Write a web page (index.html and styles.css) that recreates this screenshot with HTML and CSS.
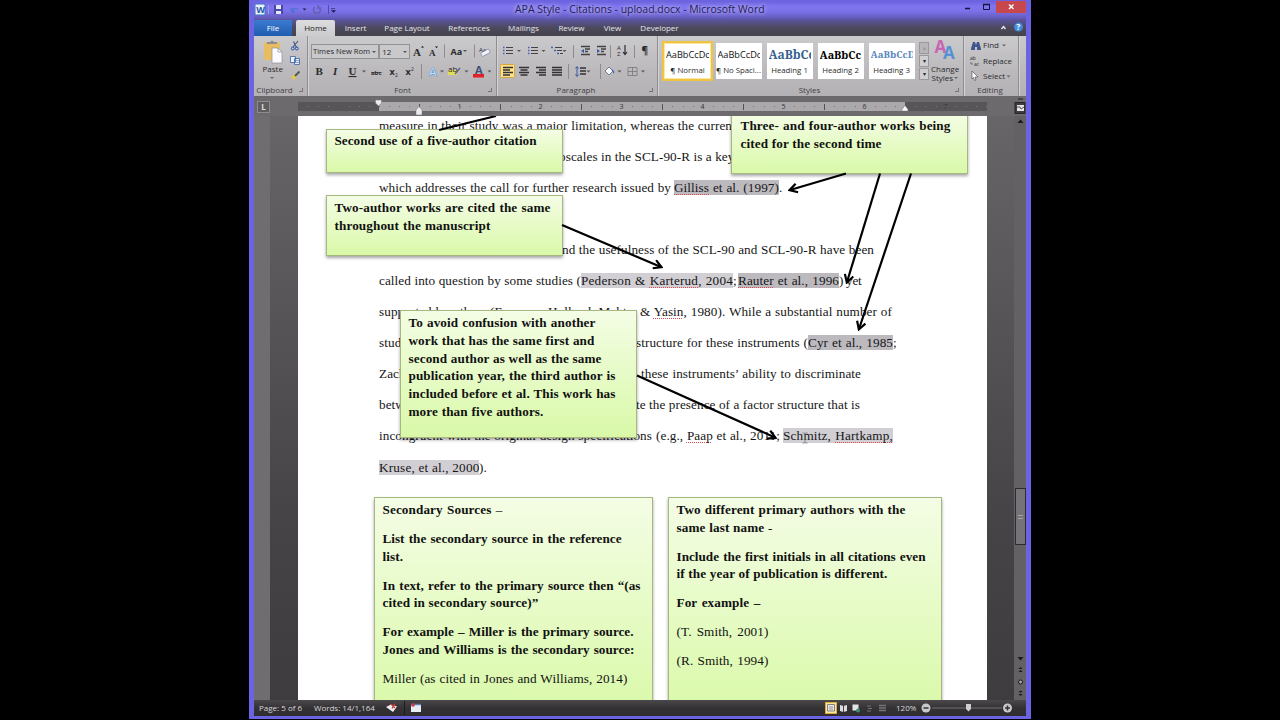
FILE: index.html
```
<!DOCTYPE html>
<html lang="en">
<head>
    <meta charset="UTF-8">
    <title>APA Style - Citations - upload.docx - Microsoft Word</title>
    <link rel="stylesheet" href="styles.css">
</head>
<body>
    <div class="window">
        <header class="titlebar">
            <svg class="quick" width="90" height="18" viewBox="254 1 90 18">
                <rect x="255" y="4" width="10" height="11" rx="1" fill="#e9f1fb" stroke="#3c74bd"/>
                <text x="256.2" y="13" font-size="9" font-weight="bold" fill="#1d5ba8">W</text>
                <path d="M268.5 5v9" stroke="#9a93e6"/>
                <path d="M274 5h9v9h-9z" fill="#4747a5"/>
                <path d="M276 5h5v4h-5zM276 11h5v3h-5z" fill="#e6e6f8"/>
                <path d="M292 11q1-4 6-2M291 8l1 4 3-1" fill="none" stroke="#4d73d8" stroke-width="1.4"/>
                <path d="M302.500 8.500h4l-2 2z" fill="#22204c"/>
                <path d="M319 7a3.500 3.500 0 1 1-4 0M318 5v3h3" fill="none" stroke="#645fae" stroke-width="1.500"/>
                <path d="M328.500 5v9" stroke="#534bab"/>
                <path d="M331 8.500h4M331.500 10.500h4l-2 2z" fill="#22204c" stroke="#22204c" stroke-width=".6"/>
            </svg>
            <h1>APA Style - Citations - upload.docx - Microsoft Word</h1>
            <svg class="controls" width="68" height="18" viewBox="958 1 68 18">
                <path d="M965 8.500h5" stroke="#17133f" stroke-width="1.500"/>
                <path d="M983.500 4.500h6v5h-6z" fill="none" stroke="#17133f"/>
                <path d="M983 4.500h7" stroke="#17133f" stroke-width="1.500"/>
                <rect x="996" y="1" width="30" height="12" fill="#c8474d"/>
                <path d="M1009 4.500l4.500 4.500M1013.500 4.500L1009 9" stroke="#fff" stroke-width="1.400"/>
            </svg>
        </header>

        <nav class="tabs">
            <span class="tab file">File</span>
            <span class="tab home">Home</span>
            <span class="tab insert">Insert</span>
            <span class="tab layout">Page Layout</span>
            <span class="tab refs">References</span>
            <span class="tab mail">Mailings</span>
            <span class="tab review">Review</span>
            <span class="tab view">View</span>
            <span class="tab dev">Developer</span>
            <svg class="help" width="26" height="17" viewBox="1000 19 26 17">
                <path d="M1001.500 29l2-2.500 2 2.500" fill="none" stroke="#eee" stroke-width="1.300"/>
                <circle cx="1018.500" cy="27" r="4.500" fill="#3f8bd8"/>
                <text x="1016.300" y="30.200" font-size="8.500" font-weight="bold" fill="#fff">?</text>
            </svg>
        </nav>

        <section class="ribbon">
            <div class="group clipboard">
                <svg width="54" height="45" viewBox="254 36 54 45">
                    <rect x="264" y="42" width="16" height="18" rx="1.500" fill="#e8bd62"/>
                    <path d="M267 44v-2h3q2-3 4 0h3v2z" fill="#8c8c92"/>
                    <path d="M272 48h6l4 4v11h-10z" fill="#fbfbfd" stroke="#8d9099" stroke-width=".7"/>
                    <path d="M278 48v4h4" fill="none" stroke="#8d9099" stroke-width=".7"/>
                    <text x="262.500" y="72">Paste</text>
                    <path d="M270 77h4l-2 2z" fill="#666"/>
                    <path d="M293.500 41.500l3 6M298 41l-5 6" stroke="#44567f" stroke-width="1.100"/>
                    <circle cx="292.800" cy="48.500" r="1.500" fill="none" stroke="#2c52a8"/>
                    <circle cx="296.800" cy="48.500" r="1.500" fill="none" stroke="#2c52a8"/>
                    <path d="M290.500 56.500h5v6h-5zM294.500 58.500h5v6h-5z" fill="#e9f1fd" stroke="#4b6ea8" stroke-width=".9"/>
                    <path d="M296 60.500h3M296 62.500h3" stroke="#4b6ea8" stroke-width=".6"/>
                    <path d="M291 77l4-3 2 2-3 4z" fill="#e5c948"/>
                    <path d="M295 76l4.500-4.500" stroke="#55565c" stroke-width="2"/>
                </svg>
                <div class="label">Clipboard <i></i></div>
            </div>

            <div class="group font">
                <div class="combos">
                    <span class="combo name">Times New Rom</span>
                    <span class="combo size">12</span>
                    <svg width="86" height="16" viewBox="411 43 86 16">
                        <text class="serif" x="414" y="56" font-size="11">A</text>
                        <path d="M422 47.500l1.500-1.500 1.500 1.500z"/>
                        <text class="serif" x="430" y="56" font-size="9">A</text>
                        <path d="M436 46.500h3l-1.500 1.500z"/>
                        <path d="M445.500 45v13M475.500 45v13" stroke="#8d8b8e" transform="translate(0 -.5)"/>
                        <text x="451.500" y="54.500" font-size="9" font-weight="bold">Aa</text>
                        <path d="M464 50h4l-2 2z" fill="#555"/>
                        <text x="480" y="51.500" font-size="6">Aa</text>
                        <rect x="482" y="51" width="9" height="4" rx="1" fill="#f3f4fb" stroke="#75809d" stroke-width=".7" transform="rotate(-28 486 53)"/>
                    </svg>
                </div>
                <svg width="186" height="20" viewBox="311 61 186 20">
                    <text class="serif" x="315.500" y="75">B</text>
                    <text class="serif italic" x="333" y="75">I</text>
                    <text class="serif under" x="348.500" y="75">U</text>
                    <path d="M362 70.500h4l-2 2z" fill="#555"/>
                    <text x="371" y="74.500" font-size="6" class="strike">abc</text>
                    <text x="389.500" y="74.500" font-size="9" font-weight="bold">x</text>
                    <text x="395" y="76.500" font-size="5">2</text>
                    <text x="405.500" y="74.500" font-size="9" font-weight="bold">x</text>
                    <text x="411" y="70.500" font-size="5">2</text>
                    <path d="M421.500 64v15" stroke="#8d8b8e"/>
                    <text x="429" y="75.500" font-size="11" font-weight="bold" fill="#e8f2fd" stroke="#5c9bd4" stroke-width=".7">A</text>
                    <path d="M440 70.500h4l-2 2z" fill="#555"/>
                    <rect x="448" y="70" width="9" height="5" fill="#dfe057"/>
                    <text x="448" y="71.500">ab</text>
                    <path d="M455 74l5-6" stroke="#5b667e" stroke-width="1.500"/>
                    <path d="M464.500 70.500h4l-2 2z" fill="#555"/>
                    <text x="475" y="74" font-size="11" font-weight="bold" fill="#3c5278">A</text>
                    <rect x="473" y="74" width="11" height="3.500" fill="#e02126"/>
                    <path d="M487.500 70.500h4l-2 2z" fill="#555"/>
                </svg>
                <div class="label">Font <i></i></div>
            </div>

            <div class="group paragraph">
                <svg width="160" height="43" viewBox="498 38 160 43">
                    <g stroke="#444246" stroke-width="1.200">
                        <path d="M507 47.500h7M507 50.500h7M507 53.500h7M532 47.500h7M532 50.500h7M532 53.500h7"/>
                        <path d="M556 47.500h7M558 50.500h5M561 53.500h3"/>
                        <path d="M582 46.500h9M586 49h5M586 51.500h3M582 54.500h9M598 46.500h9M602 49h5M602 51.500h3M598 54.500h9" stroke-width="1.500"/>
                    </g>
                    <path d="M504 47.500h1.500M504 50.500h1.500M504 53.500h1.500M529 47.500h1.500M529 50.500h1.500M529 53.500h1.500M552 47.500h2M555 50.500h2M558 53.500h2" stroke="#4263b4" stroke-width="1.500"/>
                    <path d="M585 49l-3 2 3 2zM598 49l3 2-3 2z" fill="#3458ae"/>
                    <path d="M518 50h4l-2 2zM542.500 50h4l-2 2zM563.500 50h4l-2 2z" fill="#555"/>
                    <path d="M574.500 45v13M611.500 45v13M635.500 45v13" stroke="#8d8b8e"/>
                    <text x="618" y="50" font-size="6" fill="#34549e">A</text>
                    <text x="618" y="56" font-size="6">Z</text>
                    <path d="M626 45v9M624 52l2 2.500 2-2.500" fill="none" stroke="#2c2b2e" stroke-width="1.200"/>
                    <text x="642.500" y="54" font-size="10" font-weight="bold">¶</text>
                    <rect x="501.500" y="64.500" width="14" height="13" rx="1" fill="#fbe28b" stroke="#d9a53c"/>
                    <g stroke="#333136" stroke-width="1.300">
                        <path d="M504 67.500h10M504 70h7M504 72.500h10M504 75h7"/>
                        <path d="M520 67.500h10M521.500 70h7M520 72.500h10M521.500 75h7"/>
                        <path d="M537 67.500h10M540 70h7M537 72.500h10M540 75h7"/>
                        <path d="M553 67.500h10M553 70h10M553 72.500h10M553 75h10"/>
                        <path d="M581 68h6M581 71h6M581 74h6"/>
                    </g>
                    <path d="M569.500 64v15M601.500 64v15" stroke="#8d8b8e"/>
                    <path d="M578 67v9M576.500 68.500l1.500-2 1.500 2M576.500 74.500l1.500 2 1.500-2" fill="none" stroke="#3458ae"/>
                    <path d="M606 71l4-4 4 4-4 4z" fill="#f7f8fb" stroke="#59647e" stroke-width=".8"/>
                    <path d="M612 69q4 1 3 5z" fill="#3e63b8"/>
                    <path d="M587.500 70.500h4l-2 2zM618.500 70.500h4l-2 2zM642 70.500h4l-2 2z" fill="#555"/>
                    <path d="M629 67.500h9v8h-9zM633.500 67.500v8M629 71.500h9" fill="none" stroke="#77767b" stroke-width=".8"/>
                </svg>
                <div class="label">Paragraph <i></i></div>
            </div>

            <div class="group styles">
                <div class="gallery">
                    <div class="style selected"><b>AaBbCcDc</b><span>¶ Normal</span></div>
                    <div class="style"><b>AaBbCcDc</b><span>¶ No Spaci...</span></div>
                    <div class="style h1"><b>AaBbCc</b><span>Heading 1</span></div>
                    <div class="style h2"><b>AaBbCc</b><span>Heading 2</span></div>
                    <div class="style h3"><b>AaBbCcD</b><span>Heading 3</span></div>
                    <div class="scroller"><i class="off">▴</i><i>▾</i><i>▾</i></div>
                </div>
                <svg width="34" height="43" viewBox="929 38 34 43">
                    <text class="wide" x="934.500" y="53" font-weight="bold">A</text>
                    <text class="wide" x="943" y="59" font-weight="bold">A</text>
                    <text x="931" y="71.800">Change</text>
                    <text x="931.500" y="81">Styles</text>
                    <path d="M954 77h4l-2 2z" fill="#666"/>
                </svg>
                <div class="label">Styles <i></i></div>
            </div>

            <div class="group editing">
                <svg width="54" height="43" viewBox="964 38 54 43">
                    <path d="M971 48.500l2-6.500h2l1 3 1-3h2l2 6.500v1.500h-4v-3h-2v3h-4z" fill="#3f578e"/>
                    <text x="983" y="48.300">Find</text>
                    <path d="M1002 44.500h4l-2 2z" fill="#666"/>
                    <text x="970" y="60" font-size="5">ab</text>
                    <text x="974" y="65.500" font-size="5" fill="#31549b">ac</text>
                    <path d="M971 62v2h2" fill="none" stroke="#444" stroke-width=".6"/>
                    <text x="983" y="63.800">Replace</text>
                    <path d="M972 71l6 6h-3l1 3-1.500.5-1-3-1.500 1.500z" fill="#fff" stroke="#555" stroke-width=".7"/>
                    <text x="983" y="79.300">Select</text>
                    <path d="M1006.500 75.500h4l-2 2z" fill="#666"/>
                </svg>
                <div class="label">Editing</div>
            </div>
        </section>

        <div class="ruler">
            <span class="tabstop">L</span>
            <div class="scale">
                <span class="inches"><i>1</i><i>2</i><i>3</i><i>4</i><i>5</i><i>6</i><i>7</i></span>
                <svg class="markers" width="689" height="18" viewBox="298 98 689 18">
                    <path d="M298.500 103v8M338.500 104v6M419.500 104v6M500.500 104v6M581.500 104v6M662.500 104v6M743.500 104v6M824.500 104v6" stroke="#555357"/>
                    <path d="M375.500 100h6v3l-3 3-3-3z" fill="#ececee" stroke="#77757a" stroke-width=".5"/>
                    <path d="M416 110l3-3.500 3 3.500v5h-6z" fill="#ececee" stroke="#77757a" stroke-width=".5"/>
                    <path d="M902 111v-1.500l3-4 3 4v1.500z" fill="#fafafa" stroke="#77757a" stroke-width=".5"/>
                </svg>
            </div>
            <svg width="12" height="19" viewBox="1014 97 12 19">
                <path d="M1018 99h5" stroke="#1d1c1e"/>
                <rect x="1015" y="102.500" width="10" height="11" fill="#3d3b3e" stroke="#262527"/>
                <path d="M1017 105h7v6h-7z" fill="#e6e5e7"/>
                <path d="M1017 107h3l1 2 3-2" fill="none" stroke="#555"/>
            </svg>
        </div>

        <main class="workspace">
            <div class="gutter"></div>
            <div class="page">
                <div class="text">
                    <p class="line"><span class="l1">measure in their study was a major limitation, whereas the curren</span></p>
                    <p class="line"><span class="lead l2"></span><span class="l2b">oscales in the SCL-90-R is a key</span></p>
                    <p class="line"><span class="l3">which addresses the call for further research issued by</span><mark class="dark l3b"><u>Gilliss</u> et al. (1997)</mark>.</p>
                    <p class="line"></p>
                    <p class="line"><span class="lead l5"></span><span class="l5b">nd the usefulness of the SCL-90 and SCL-90-R have been</span></p>
                    <p class="line"><span class="l6">called into question by some studies (</span><mark class="l6b">Pederson &amp; <u>Karterud</u>, 2004</mark><span class="l6c">;</span><mark class="dark l6d"><u>Rauter</u> et al., 1996</mark><span class="l6e">) yet</span></p>
                    <p class="line"><span class="l7">supported by others (Evenson, Holland, Mehta,</span><span class="l7b">&amp; <u>Yasin</u>, 1980). While a substantial number of</span></p>
                    <p class="line"><span class="lead l8">stud</span><span class="l8b">structure for these instruments (</span><mark class="dark l8c">Cyr et al., 1985</mark>;</p>
                    <p class="line"><span class="lead l9">Zach</span><span class="l9b">these instruments’ ability to discriminate</span></p>
                    <p class="line"><span class="lead l10">betw</span><span class="l10b">te the presence of a factor structure that is</span></p>
                    <p class="line"><span class="l11">incongruent with the original design specifications</span><span class="l11b">(e.g., <u>Paap</u> et al., 2011;</span><mark class="l11c">Schmitz, <u>Hartkamp,</u></mark></p>
                    <p class="line"><mark class="l12">Kruse, et al., 2000</mark>).</p>
                </div>

                <svg class="arrows" width="689" height="584" viewBox="298 116 689 584">
                    <defs>
                        <marker id="head" viewBox="0 0 10 10" refX="8" refY="5" markerWidth="11" markerHeight="11" markerUnits="userSpaceOnUse" orient="auto">
                            <path d="M1.500 1L8.500 5l-7 4" fill="none" stroke="#000" stroke-width="2"/>
                        </marker>
                    </defs>
                    <path d="M496 116l-57 14"/>
                    <path d="M846 173.500l-56 16.500" marker-end="url(#head)"/>
                    <path d="M880 173.500L847 282" marker-end="url(#head)"/>
                    <path d="M911 173.500L859 329" marker-end="url(#head)"/>
                    <path d="M562 225l99 42" marker-end="url(#head)"/>
                    <path d="M637 375.500L775 437.500" marker-end="url(#head)"/>
                    <path class="ibeam" d="M802.500 433h2l.5.5.5-.5h2M802.500 443h2l.5-.5.5.5h2M805 433v10"/>
                </svg>

                <aside class="note five"><p><span class="n1">Second use of a five-author citation</span></p></aside>
                <aside class="note two"><p><span class="n2">Two-author works are cited the same</span><span class="n3">throughout the manuscript</span></p></aside>
                <aside class="note three"><p><span class="n4">Three- and four-author works being</span><span class="n5">cited for the second time</span></p></aside>
                <aside class="note avoid">
                    <p>
                        <span class="a1">To avoid confusion with another</span>
                        <span class="a2">work that has the same first and</span>
                        <span class="a3">second author as well as the same</span>
                        <span class="a4">publication year, the third author is</span>
                        <span class="a5">included before et al. This work has</span>
                        <span class="a6">more than five authors.</span>
                    </p>
                </aside>
                <aside class="note secondary">
                    <p><span class="b1">Secondary Sources <em>–</em></span></p>
                    <p><span class="b2">List the secondary source in the reference</span><span class="last">list.</span></p>
                    <p><span class="b3">In text, refer to the primary source then “(as</span><span class="b4">cited in secondary source)”</span></p>
                    <p><span class="b5">For example – Miller is the primary source.</span><span class="b6">Jones and Williams is the secondary source:</span></p>
                    <p class="plain"><span class="b7">Miller (as cited in Jones and Williams, 2014)</span></p>
                </aside>
                <aside class="note lastname">
                    <p><span class="c1">Two different primary authors with the</span><span class="c2">same last name <em>-</em></span></p>
                    <p><span class="c3">Include the first initials in all citations even</span><span class="c4">if the year of publication is different.</span></p>
                    <p><span class="c5">For example –</span></p>
                    <p class="plain"><span class="c6">(T. Smith, 2001)</span></p>
                    <p class="plain"><span class="c7">(R. Smith, 1994)</span></p>
                </aside>
            </div>
            <div class="backdrop"></div>
            <div class="scrollbar">
                <svg width="12" height="584" viewBox="1014 116 12 584">
                    <path d="M1017.500 123l3-3.500 3 3.500z" fill="#1b1a1c"/>
                    <rect x="1015.500" y="488.500" width="10" height="56" fill="#757377" stroke="#2d2b2e"/>
                    <path d="M1018 515.500h5M1018 518.500h5" stroke="#a5a3a6"/>
                    <path d="M1017.500 657l3 3.500 3-3.500z" fill="#1b1a1c"/>
                    <path d="M1018.500 669l2-2 2 2zM1018.500 672l2-2 2 2zM1018.500 691l2 2 2-2zM1018.500 694l2 2 2-2z" fill="#1b1a1c"/>
                    <circle cx="1020.500" cy="682" r="2" fill="#a5a3a6" stroke="#1b1a1c"/>
                </svg>
            </div>
        </main>

        <footer class="status">
            <span class="pages">Page: 5 of 6</span>
            <span class="words">Words: 14/1,164</span>
            <svg width="46" height="16" viewBox="380 700 46 16">
                <path d="M386 707l5-2.500 6 2-4 5.500z" fill="#edeff5"/>
                <path d="M391 704l4 4M395 703.500l-3 5" stroke="#cf3838" stroke-width="1.300"/>
                <path d="M404.500 701v14" stroke="#1c1b1d"/>
                <rect x="411" y="704" width="10" height="8" fill="#e9edf6"/>
                <path d="M411 704.500h10" stroke="#5d80bd" stroke-width="1.500"/>
                <circle cx="413" cy="705" r="1.800" fill="#c93b3b"/>
            </svg>
            <svg class="views" width="72" height="16" viewBox="820 700 72 16">
                <rect x="825.500" y="702.500" width="11" height="11" fill="#fae7a3" stroke="#dfa73e"/>
                <path d="M827.500 704.500h7v6.500h-7z" fill="#e8e8ea" stroke="#67666a" stroke-width=".8"/>
                <path d="M829 707h4M829 709h4" stroke="#67666a" stroke-width=".7"/>
                <path d="M840 705l3.500 1 3.500-1v6l-3.500 1-3.500-1z" fill="#dddce0"/>
                <path d="M843.500 706v6" stroke="#444"/>
                <rect x="852.500" y="704.500" width="6" height="6" fill="#e5e5e8"/>
                <circle cx="858" cy="710.500" r="2" fill="#3a8d79"/>
                <path d="M867 706h4M868 708.500h4M867 711h4" stroke="#77757a"/>
                <path d="M879 705.500h7M879 708h7M879 710.500h7" stroke="#77757a" stroke-width="1.300"/>
            </svg>
            <span class="percent">120%</span>
            <svg width="110" height="16" viewBox="916 700 110 16">
                <path d="M932 708h70" stroke="#737175"/>
                <circle cx="926" cy="708" r="4.500" fill="#c9c8cb"/>
                <path d="M923.500 708h5" stroke="#343235" stroke-width="1.500"/>
                <path d="M966 704h5v5l-2.500 2.500-2.500-2.500z" fill="#cfced1"/>
                <circle cx="1007.500" cy="708" r="4.500" fill="#c9c8cb"/>
                <path d="M1005 708h5M1007.500 705.500v5" stroke="#343235" stroke-width="1.500"/>
            </svg>
        </footer>
    </div>
</body>
</html>
```
FILE: styles.css
```
* {
    margin: 0;
    padding: 0;
    box-sizing: border-box;
}

body {
    width: 1280px;
    height: 720px;
    overflow: hidden;
    background: #000;
    font-family: "Open Sans", "Noto Sans", sans-serif;
    font-size: 8px;
    color: #2b2a2d;
}

svg {
    display: block;
    flex: none;
}

i {
    font-style: normal;
}

.window {
    width: 782px;
    height: 719px;
    margin-left: 249px;
    border: solid #6c63e2;
    border-width: 1px 5px 4px;
    display: flex;
    flex-direction: column;
    background: #6c63e2;
}

/* Title bar */
.titlebar {
    height: 18px;
    display: flex;
    justify-content: space-between;
    background: linear-gradient(#6a61dc, #7f75ef 30%, #7a70e6 60%, #5f58b4);
}

.titlebar h1 {
    font-size: 10.45px;
    line-height: 17px;
    font-weight: normal;
    white-space: nowrap;
    color: #25214f;
    text-shadow: 0 0 5px #b9b3f8, 0 0 4px #b9b3f8;
}

.quick {
    margin-right: 171px;
}

.controls {
    margin-left: auto;
}

/* Tabs */
.tabs {
    height: 17px;
    display: flex;
    align-items: flex-end;
    background: linear-gradient(#5c56a4, #4c495f 50%, #454348);
}

.tab {
    height: 16px;
    line-height: 16px;
    font-size: 8px;
    text-align: center;
    white-space: nowrap;
    color: #e6e5ea;
}

.file {
    width: 38px;
    margin-right: 4px;
    background: linear-gradient(#3b7bd0, #205cb0);
    color: #fff;
}

.home {
    width: 39px;
    background: linear-gradient(#dddcdf, #cccbce);
    border-radius: 2px 2px 0 0;
    color: #222;
}

.insert { width: 41px; }
.layout { width: 62px; }
.refs { width: 62px; }
.mail { width: 47px; }
.review { width: 49px; }
.view { width: 33px; }
.dev { width: 61px; }

.help {
    margin-left: auto;
}

/* Ribbon */
.ribbon {
    height: 61px;
    display: flex;
    background: linear-gradient(#cac9cc, #bbb9bc 60%, #b3b1b4);
    border-bottom: 1px solid #6a686b;
}

.group {
    height: 60px;
    display: flex;
    flex-direction: column;
    justify-content: flex-end;
    border-right: 1px solid #8f8d90;
    box-shadow: 1px 0 #d3d2d4;
}

.clipboard { width: 54px; }
.font { width: 189px; padding-left: 3px; }
.paragraph { width: 161px; }
.styles { width: 306px; position: relative; }
.editing { width: 55px; }

.ribbon svg {
    overflow: visible;
}

.ribbon svg text {
    font-size: 8px;
    fill: #2b2a2d;
}

.ribbon svg text[font-size="5"] { font-size: 5px; }
.ribbon svg text[font-size="6"] { font-size: 6px; }
.ribbon svg text[font-size="9"] { font-size: 9px; }
.ribbon svg text[font-size="10"] { font-size: 10px; }
.ribbon svg text[font-size="11"] { font-size: 11px; }
.ribbon svg text[fill="#3c5278"] { fill: #3c5278; }
.ribbon svg text[fill="#e8f2fd"] { fill: #e8f2fd; }

.ribbon svg .serif {
    font-family: "Liberation Serif", serif;
    font-weight: bold;
    font-size: 11px;
}

.ribbon svg .italic { font-style: italic; }
.ribbon svg .under { text-decoration: underline; }
.ribbon svg .strike { text-decoration: line-through; font-weight: bold; }

.ribbon svg .wide {
    font-size: 17px;
    fill: #5592d3;
}

.ribbon svg .wide:first-child {
    fill: #c765b3;
}

.label {
    height: 15px;
    line-height: 17px;
    padding-right: 2px;
    text-align: center;
    color: #3f3e41;
    position: relative;
}

.clipboard .label {
    padding-right: 12px;
}

.label i {
    position: absolute;
    right: 4px;
    top: 7px;
    width: 4px;
    height: 4px;
    border: solid #747276;
    border-width: 0 1px 1px 0;
}

.combos {
    display: flex;
    align-items: center;
    margin-bottom: 2px;
}

.combo {
    height: 15px;
    line-height: 13px;
    padding-left: 2px;
    border: 1px solid #949296;
    background: #c9c8cb;
    position: relative;
    white-space: nowrap;
}

.combo::after {
    content: "";
    position: absolute;
    right: 2px;
    top: 6px;
    border: 2px solid transparent;
    border-top-color: #555;
}

.name {
    width: 69px;
    padding-left: 1px;
    font-size: 7.6px;
}

.size { width: 31px; }

.gallery {
    position: absolute;
    left: 4px;
    top: 6px;
    display: flex;
}

.style {
    width: 46px;
    height: 36px;
    margin: 1px 2.5px;
    background: #fff;
    text-align: center;
    overflow: hidden;
    white-space: nowrap;
}

.style b {
    display: block;
    height: 22px;
    line-height: 23px;
    font-size: 9.2px;
    font-weight: normal;
    text-align: left;
    color: #111;
    overflow: hidden;
    margin: 0 2px;
}

.style span {
    display: block;
    line-height: 11px;
    font-size: 7.8px;
}

.selected {
    width: 51px;
    height: 40px;
    margin: -1px 0;
    border: 2px solid #f0c443;
    box-shadow: inset 0 0 0 1px #fbe79e;
}

.h1 b,
.h2 b,
.h3 b {
    font-family: "Noto Serif", "DejaVu Serif", serif;
    font-weight: bold;
}

.h1 b { color: #35608f; font-size: 12px; }
.h2 b { color: #000; font-size: 10.8px; }
.h3 b { color: #5b88bd; font-size: 9.6px; }

.scroller {
    width: 10px;
    margin-left: 2px;
}

.scroller i {
    display: block;
    height: 12px;
    margin-bottom: 1px;
    border: 1px solid #9a989b;
    background: #cfced1;
    font-size: 6px;
    line-height: 10px;
    text-align: center;
}

.scroller .off {
    color: #969497;
    background: #b8b6b9;
}

.styles > svg {
    align-self: flex-end;
}

/* Ruler */
.ruler {
    height: 19px;
    display: flex;
    background: #6c6a6d;
}

.tabstop {
    width: 13px;
    height: 12px;
    margin: 4px 28px 0 3px;
    border: 1px solid #8e8c8f;
    background: #5f5d60;
    font-size: 8px;
    line-height: 10px;
    font-weight: bold;
    text-align: center;
    color: #ddd;
}

.scale {
    width: 689px;
    height: 9px;
    margin: 5px 27px 0 0;
    position: relative;
    background: linear-gradient(90deg, #575558 81px, #aaa8ab 81px 607px, #575558 607px);
}

.inches {
    height: 9px;
    display: flex;
    padding-left: 121px;
    background: repeating-linear-gradient(90deg, #77757a 0 1px, transparent 1px 10.12px) 0 4px / 100% 1px no-repeat;
}

.inches i {
    width: 81px;
    text-align: center;
    font-size: 7px;
    line-height: 9px;
    color: #3a383b;
}

.markers {
    position: absolute;
    left: 0;
    top: -4px;
}

/* Document */
.workspace {
    height: 584px;
    display: flex;
    background: linear-gradient(#676568, #464346 70%, #3f3c3f);
}

.gutter {
    width: 44px;
    background: linear-gradient(90deg, #6f6d70 16px, transparent 16px);
}

.page {
    width: 689px;
    position: relative;
    overflow: hidden;
    background: #fff;
    color: #161616;
    font-family: "Liberation Serif", serif;
    font-size: 13.2px;
}

.backdrop {
    width: 27px;
}

.scrollbar {
    width: 12px;
    background: #636164;
}

.text {
    margin: -6.5px 0 0 81px;
    letter-spacing: .08px;
}

.line {
    height: 31.1px;
    line-height: 31.1px;
    display: flex;
    align-items: center;
    white-space: nowrap;
}

.line > * {
    flex: none;
}

.line span:not(.lead),
.line mark,
.note span {
    text-align: justify;
    text-align-last: justify;
    white-space: nowrap;
}

.line mark {
    height: 15px;
    line-height: 15px;
    background: #d2cfd4;
    color: inherit;
}

.line .dark {
    background: #bdbabf;
}

u {
    text-decoration: underline dotted #dc4b50 1px;
    text-underline-offset: 2px;
    text-decoration-skip-ink: none;
}

.l1 { width: 353px; }
.l2 { width: 180px; }
.l2b { width: 173px; }
.l3 { width: 292px; margin-right: 3px; }
.l3b { width: 105px; }
.l5 { width: 183px; }
.l5b { width: 312px; }
.l6 { width: 202px; }
.l6b { width: 152px; }
.l6c { width: 5px; }
.l6d { width: 101px; }
.l6e { width: 22px; letter-spacing: -.3px; }
.l7 { width: 257px; margin-right: 4px; }
.l7b { width: 252px; }
.l8 { width: 257px; }
.l8b { width: 172px; }
.l8c { width: 85px; }
.l9 { width: 262px; }
.l9b { width: 220px; }
.l10 { width: 257px; }
.l10b { width: 224px; }
.l11 { width: 273px; margin-right: 4px; }
.l11b { width: 124px; margin-right: 3px; }
.l11c { width: 110px; }
.l12 { width: 100px; }

.l6b,
.l11c,
.l12 {
    letter-spacing: .2px;
}

.arrows {
    position: absolute;
    left: 0;
    top: 0;
    z-index: 2;
    fill: none;
    stroke: #000;
    stroke-width: 2.2;
}

.arrows .ibeam {
    stroke: #77757a;
    stroke-width: .8;
}

/* Callouts lying over the page */
.note {
    position: absolute;
    padding: 3px 7.5px;
    border: 1px solid #a6b87f;
    background: linear-gradient(#f4fde5, #d9f9a8);
    box-shadow: 0 2px 3px rgba(0, 0, 0, .35);
    font-weight: bold;
    line-height: 17.75px;
    letter-spacing: .1px;
    color: #111;
}

.note span {
    display: block;
}

.note p {
    margin-bottom: 11.2px;
}

.note em,
.plain {
    font-style: normal;
    font-weight: normal;
}

.five { left: 28px; top: 13px; width: 237px; height: 44px; padding-top: 2px; }
.two { left: 28px; top: 79px; width: 237px; height: 61px; }
.three { left: 433px; top: -3px; width: 237px; height: 61px; padding-left: 8.5px; }
.avoid { left: 102px; top: 194px; width: 237px; height: 128px; }
.secondary { left: 76px; top: 381px; width: 279px; height: 220px; }
.lastname { left: 370px; top: 381px; width: 274px; height: 220px; }

.n1 { width: 202px; }
.n2 { width: 216px; }
.n3 { width: 156px; }
.n4 { width: 210px; }
.n5 { width: 141px; }
.a1 { width: 187px; }
.a2 { width: 186px; }
.a3 { width: 193px; }
.a4 { width: 207px; }
.a5 { width: 207px; }
.a6 { width: 135px; }
.b1 { width: 120px; }
.b2 { width: 239px; }
.b3 { width: 258px; }
.b4 { width: 156px; }
.b5 { width: 251px; }
.b6 { width: 252px; }
.b7 { width: 245px; }
.c1 { width: 229px; }
.c2 { width: 96px; }
.c3 { width: 249px; }
.c4 { width: 211px; }
.c5 { width: 84px; }
.c6 { width: 92px; }
.c7 { width: 92px; }

/* these lines are set a little tighter */
.n1, .b2, .b3, .b5, .b6, .c3 {
    letter-spacing: 0;
}

.note .last {
    text-align-last: left;
}

/* Status bar */
.status {
    height: 16px;
    display: flex;
    line-height: 16px;
    background: linear-gradient(#4a484b, #343235 50%, #2f2d30);
    color: #d8d7da;
    white-space: nowrap;
}

.pages {
    width: 60px;
    padding-left: 5px;
}

.words {
    width: 66px;
}

.views {
    margin-left: auto;
}

.percent {
    width: 24px;
    padding-left: 4px;
}
```
